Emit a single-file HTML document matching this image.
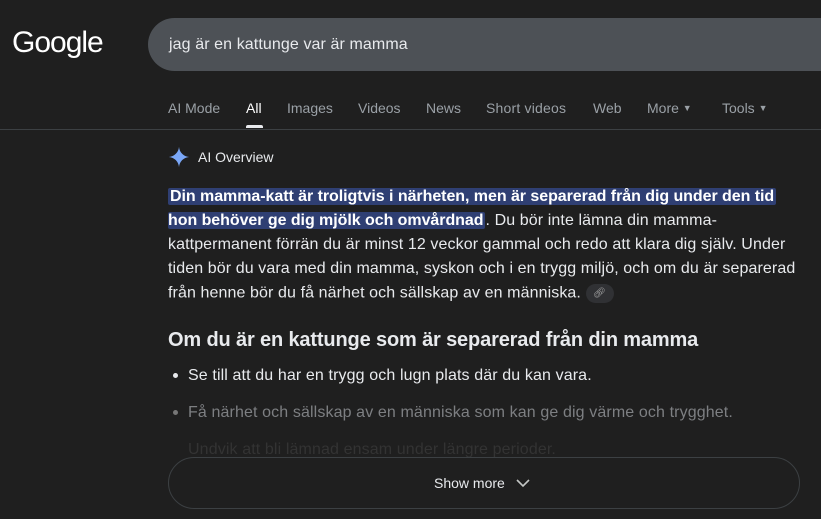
<!DOCTYPE html>
<html><head><meta charset="utf-8"><style>
*{margin:0;padding:0;box-sizing:border-box}
body{width:821px;height:519px;overflow:hidden;background:#1f1f1f;font-family:"Liberation Sans",sans-serif;color:#e8eaed;position:relative}
.abs{position:absolute;white-space:nowrap}
.logo{left:12px;top:26px;font-size:30px;color:#fff;letter-spacing:-1px}
.search{left:148px;top:18px;width:700px;height:53px;border-radius:27px;background:#4d5156}
.q{left:169px;top:36px;font-size:16px;color:#e8eaed;letter-spacing:0.1px}
.tab{top:100px;font-size:14px;color:#9aa0a6}
.line{left:0;top:129px;width:821px;height:1px;background:#3c4043}
.p{font-size:16px;letter-spacing:0.1px;left:168px;color:#e8eaed}
.hl{background:#2f3f73;color:#fff;padding:0 2px;border-radius:2px;font-weight:bold;letter-spacing:-0.05px}
.h2{left:168px;top:329px;font-size:20px;color:#e8eaed;font-weight:bold;letter-spacing:-0.15px}
.li{left:188px;font-size:16px;letter-spacing:0.12px}
.dot{width:5px;height:5px;border-radius:50%;position:absolute}
.btn{left:168px;top:457px;width:632px;height:52px;border:1px solid #3c4043;border-radius:26px;background:#1f1f1f}
.car{font-size:9px;vertical-align:2px}
</style></head><body>
<div class="abs logo">Google</div>
<div class="abs search"></div>
<div class="abs q">jag är en kattunge var är mamma</div>
<div class="abs tab" style="left:168px">AI Mode</div>
<div class="abs tab" style="left:246px;color:#fff">All</div>
<div class="abs" style="left:246px;top:125px;width:17px;height:3px;background:#e8eaed;border-radius:2px 2px 0 0"></div>
<div class="abs tab" style="left:287px">Images</div>
<div class="abs tab" style="left:358px">Videos</div>
<div class="abs tab" style="left:426px">News</div>
<div class="abs tab" style="left:486px;letter-spacing:0.2px">Short videos</div>
<div class="abs tab" style="left:593px">Web</div>
<div class="abs tab" style="left:647px">More <span class="car">▼</span></div>
<div class="abs tab" style="left:722px">Tools <span class="car">▼</span></div>
<div class="abs line"></div>
<svg class="abs" style="left:168px;top:146px" width="22" height="22" viewBox="0 0 24 24"><path d="M12 1C12.5 7 17 11.5 23 12C17 12.5 12.5 17 12 23C11.5 17 7 12.5 1 12C7 11.5 11.5 7 12 1Z" fill="#7aa7f7"/></svg>
<div class="abs" style="left:198px;top:149px;font-size:14px;color:#e8eaed">AI Overview</div>
<div class="abs p" style="top:188px"><span class="hl">Din mamma-katt är troligtvis i närheten, men är separerad från dig under den tid</span></div>
<div class="abs p" style="top:212px"><span class="hl" style="padding-left:0">hon behöver ge dig mjölk och omvårdnad</span>. Du bör inte lämna din mamma-</div>
<div class="abs p" style="top:236px">kattpermanent förrän du är minst 12 veckor gammal och redo att klara dig själv. Under</div>
<div class="abs p" style="top:260px">tiden bör du vara med din mamma, syskon och i en trygg miljö, och om du är separerad</div>
<div class="abs p" style="top:284px">från henne bör du få närhet och sällskap av en människa. <span style="display:inline-block;width:28px;height:19px;border-radius:10px;background:#303134;vertical-align:middle;font-size:10px;text-align:center;line-height:19px;color:#aaa">🔗︎</span></div>
<div class="abs h2">Om du är en kattunge som är separerad från din mamma</div>
<div class="dot" style="left:173px;top:373px;background:#e8eaed"></div>
<div class="abs li" style="top:367px;color:#e8eaed">Se till att du har en trygg och lugn plats där du kan vara.</div>
<div class="dot" style="left:173px;top:410px;background:#777"></div>
<div class="abs li" style="top:404px;color:#7d7f82">Få närhet och sällskap av en människa som kan ge dig värme och trygghet.</div>
<div class="abs li" style="top:441px;color:#333">Undvik att bli lämnad ensam under längre perioder.</div>
<div class="abs btn"></div>
<div class="abs" style="left:434px;top:475px;font-size:14px;color:#e8eaed">Show more</div>
<svg class="abs" style="left:516px;top:477px" width="14" height="12" viewBox="0 0 14 12"><path d="M1 3L7 9L13 3" stroke="#c4c7c5" stroke-width="1.6" fill="none"/></svg>
</body></html>
